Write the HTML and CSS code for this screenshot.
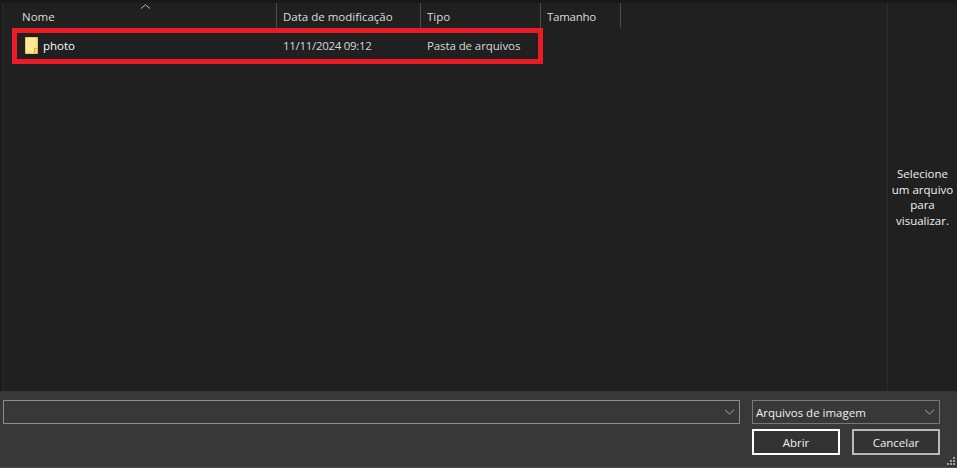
FILE: index.html
```html
<!DOCTYPE html>
<html lang="pt-BR">
<head>
<meta charset="utf-8">
<title>Abrir</title>
<link rel="stylesheet" href="styles.css">
</head>
<body>
<div class="dialog">
  <div class="topline"></div>
  <div class="main">
    <div class="rail"></div>
    <div class="list">
      <div class="head">
        <svg class="sort" width="11" height="5" viewBox="0 0 11 5"><path d="M1 4.500 5.500.8 10 4.500" fill="none" stroke="#b5b5b5" stroke-width="1"/></svg>
        <div class="col col-name">Nome</div>
        <div class="col col-date">Data de modificação</div>
        <div class="col col-type">Tipo</div>
        <div class="col col-size">Tamanho</div>
      </div>
      <div class="row">
        <div class="cell col-name name">
          <svg class="folder" width="13" height="17" viewBox="0 0 13 17"><path d="M.5.500h12v16H.5z" fill="#fcdf7e" stroke="#eec65a"/><path d="M1 1h10v14H1z" fill="#ffe99a"/><path d="M9.500 16.500v-5h3v5z" fill="#fbdc78" stroke="#d9b445"/></svg>
          <span>photo</span>
        </div>
        <div class="cell col-date date">11/11/2024 09:12</div>
        <div class="cell col-type">Pasta de arquivos</div>
      </div>
      <div class="mark"></div>
    </div>
    <div class="preview"><p>Selecione um arquivo para visualizar.</p></div>
  </div>
  <div class="footer">
    <div class="fields">
      <div class="box filename">
        <svg class="chev" width="11" height="6" viewBox="0 0 11 6"><path d="M1 .800 5.500 5 10 .800" fill="none" stroke="#a8a8a8"/></svg>
      </div>
      <div class="box filetype">
        <span>Arquivos de imagem</span>
        <svg class="chev" width="11" height="6" viewBox="0 0 11 6"><path d="M1 .800 5.500 5 10 .800" fill="none" stroke="#a8a8a8"/></svg>
      </div>
    </div>
    <div class="buttons">
      <button class="btn primary">Abrir</button>
      <button class="btn">Cancelar</button>
    </div>
    <svg class="grip" width="9" height="9" viewBox="0 0 9 9" fill="#a0a0a0"><path d="M6 0h2v2H6zM3 3h2v2H3zM6 3h2v2H6zM0 6h2v2H0zM3 6h2v2H3zM6 6h2v2H6z"/></svg>
  </div>
</div>
</body>
</html>
```
FILE: styles.css
```css
* { box-sizing: border-box; }
html, body { margin: 0; height: 100%; overflow: hidden; }
body {
  background: #202020;
  color: #fff;
  font-family: "Open Sans", "Noto Sans", sans-serif;
  font-size: 11.5px;
}
.dialog { display: flex; flex-direction: column; height: 468px; }
.topline { height: 3px; background: #191919; flex: none; }
.main { flex: 1; display: flex; min-height: 0; }
.rail { width: 3px; flex: none; background: #191919; border-right: 1px solid #2b2b2b; }
.list { flex: 1; position: relative; }
.head { display: flex; height: 25px; position: relative; padding-left: 13px; color: #dcdcdc; }
.sort { position: absolute; left: 137px; top: 1px; }
.col { display: flex; align-items: center; padding: 1px 0 0 6px; border-right: 1px solid #4d4d4d; height: 25px; }
.col-name { width: 261px; }
.col-date { width: 144px; }
.col-type { width: 120px; }
.col-size { width: 80px; letter-spacing: -0.25px; }
.row { display: flex; height: 34px; padding-left: 13px; align-items: center; color: #d9d9d9; }
.cell { padding-left: 6px; }
.date { letter-spacing: -0.3px; }
.cell.col-type { padding-left: 6px; letter-spacing: -0.1px; }
.name { display: flex; align-items: center; gap: 5px; color: #fff; padding-left: 9px; font-size: 11.5px; }
.folder { flex: none; }
.mark {
  position: absolute;
  left: 9px;
  top: 25px;
  width: 531px;
  height: 36px;
  border: 5px solid #ed1c24;
  pointer-events: none;
}
.preview {
  width: 70px;
  flex: none;
  border-left: 1px solid #2b2b2b;
  display: flex;
  align-items: center;
  justify-content: center;
}
.preview p { margin: 0; width: 66px; text-align: center; line-height: 15.500px; color: #f2f2f2; }
.footer {
  height: 77px;
  flex: none;
  background: #383838;
  border-bottom: 1px solid #4a4a4a;
  padding: 9px 17px 0 3px;
  position: relative;
}
.fields { display: flex; gap: 12px; height: 24px; }
.box {
  border: 1px solid #8c8c8c;
  height: 24px;
  display: flex;
  align-items: center;
  justify-content: space-between;
  padding: 0 4px 0 3px;
  color: #f0f0f0;
}
.filename { width: 737px; justify-content: flex-end; }
.filetype { width: 188px; border-color: #787878; }
.chev { flex: none; }
.buttons { display: flex; gap: 12px; margin: 5px 0 0 749px; }
.btn {
  width: 88px;
  height: 26px;
  padding: 0;
  background: #333;
  color: #f0f0f0;
  border: 2px solid #b9b9b9;
  font: inherit;
}
.primary { border-color: #fff; }
.grip { position: absolute; right: 1px; bottom: 1px; }
```
